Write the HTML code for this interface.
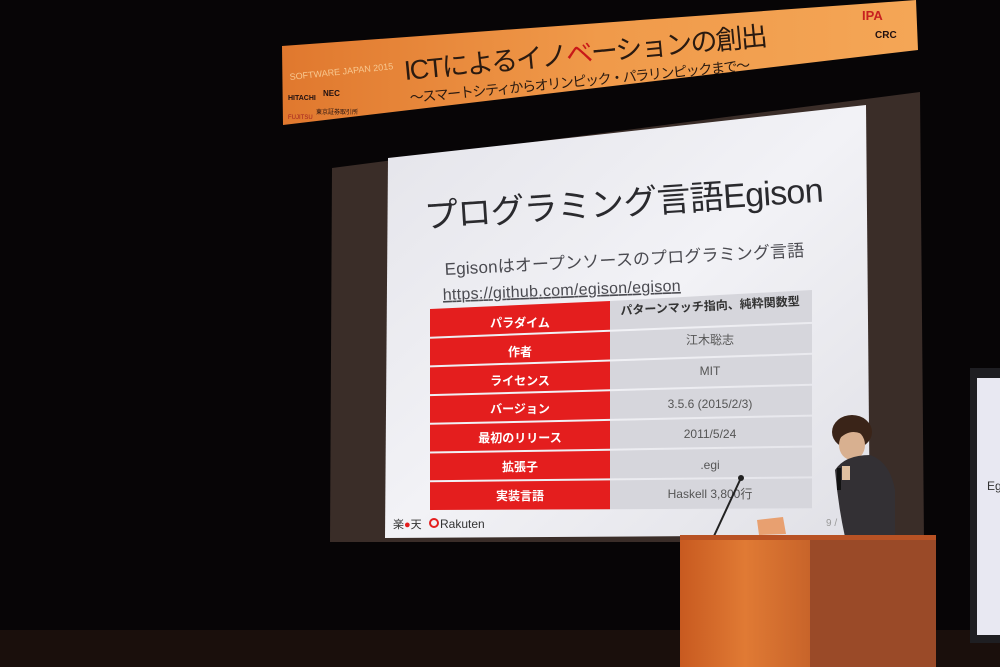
<!DOCTYPE html>
<html><head><meta charset="utf-8"><style>
html,body{margin:0;padding:0;background:#060405;}
svg{display:block}
text{font-family:"Liberation Sans","Noto Sans CJK JP",sans-serif;}
</style></head><body>
<svg width="1000" height="667" viewBox="0 0 1000 667" xmlns="http://www.w3.org/2000/svg">
<defs>
<linearGradient id="ban" x1="0" y1="0" x2="1" y2="0">
<stop offset="0" stop-color="#e0782e"/><stop offset="0.5" stop-color="#f09a4a"/><stop offset="1" stop-color="#f4a656"/>
</linearGradient>
<linearGradient id="slide" x1="0" y1="0" x2="1" y2="1">
<stop offset="0" stop-color="#e4e4ea"/><stop offset="0.5" stop-color="#f2f2f6"/><stop offset="1" stop-color="#e0e0e6"/>
</linearGradient>
<linearGradient id="pod" x1="0" y1="0" x2="1" y2="0">
<stop offset="0" stop-color="#c85a20"/><stop offset="0.5" stop-color="#e07a34"/><stop offset="1" stop-color="#c8642a"/>
</linearGradient>
</defs>
<rect width="1000" height="667" fill="#070506"/>
<rect x="0" y="630" width="1000" height="37" fill="#1a0f0c"/>
<polygon points="332,168 920,92 924,542 330,542" fill="#3a2d28"/>
<polygon points="388,158 866,105 870,535 385,538" fill="url(#slide)"/>
<!-- banner -->
<polygon points="282,46 916,0 918,50 283,125" fill="url(#ban)"/>
<text x="290" y="80" font-size="9" fill="#f8c890" transform="rotate(-6 290 80)">SOFTWARE JAPAN 2015</text>
<text x="288" y="100" font-size="7" font-weight="bold" fill="#201010">HITACHI</text>
<text x="323" y="96" font-size="8" font-weight="bold" fill="#201010">NEC</text>
<text x="288" y="119" font-size="6" fill="#a02020">FUJITSU</text>
<text x="316" y="114" font-size="6" fill="#201010">東京証券取引所</text>
<g transform="rotate(-5.5 405 80)">
<text x="405" y="80" font-size="27" fill="#2a1a10" textLength="365">ICTによるイノ<tspan fill="#c81818">ベ</tspan>ーションの創出</text>
<text x="408" y="103" font-size="14" fill="#2a1a10" textLength="342">〜スマートシティからオリンピック・パラリンピックまで〜</text>
</g>
<text x="862" y="20" font-size="13" font-weight="bold" fill="#c82020">IPA</text>
<text x="875" y="38" font-size="10" font-weight="bold" fill="#201010">CRC</text>
<!-- slide text -->
<g transform="rotate(-3.8 425 228)">
<text x="425" y="228" font-size="34" fill="#2a2a2e" textLength="400">プログラミング言語Egison</text>
</g>
<g transform="rotate(-3 445 275)">
<text x="445" y="275" font-size="17" fill="#4a4a50" textLength="360">Egisonはオープンソースのプログラミング言語</text>
</g>
<g transform="rotate(-2.2 443 300)">
<text x="443" y="300" font-size="16" fill="#4a4a50" text-decoration="underline" textLength="238">https://github.com/egison/egison</text>
</g>
<g fill="#e41e1e">
<polygon points="430,309 610,301 610,329.7 430,336.7"/>
<polygon points="430,338.7 610,331.7 610,359.5 430,365.4"/>
<polygon points="430,367.4 610,361.5 610,389.2 430,394.1"/>
<polygon points="430,396.1 610,391.2 610,418.9 430,422.8"/>
<polygon points="430,424.8 610,420.9 610,448.7 430,451.5"/>
<polygon points="430,453.5 610,450.7 610,478.4 430,480.2"/>
<polygon points="430,482.2 610,480.4 610,509.2 430,510"/>
</g>
<g fill="#d6d6dc">
<polygon points="610,301 812,290 812,321.9 610,329.7"/>
<polygon points="610,331.7 812,323.9 812,352.8 610,359.5"/>
<polygon points="610,361.5 812,354.8 812,383.7 610,389.2"/>
<polygon points="610,391.2 812,385.7 812,414.6 610,418.9"/>
<polygon points="610,420.9 812,416.6 812,445.5 610,448.7"/>
<polygon points="610,450.7 812,447.5 812,476.4 610,478.4"/>
<polygon points="610,480.4 812,478.4 812,508.3 610,509.2"/>
</g>
<g font-size="12" font-weight="bold" fill="#fff" text-anchor="middle">
<text x="520" y="327">パラダイム</text>
<text x="520" y="356">作者</text>
<text x="520" y="385">ライセンス</text>
<text x="520" y="413">バージョン</text>
<text x="520" y="442">最初のリリース</text>
<text x="520" y="471">拡張子</text>
<text x="520" y="500">実装言語</text>
</g>
<g font-size="12" fill="#555" text-anchor="middle">
<text x="710" y="310" font-weight="bold" fill="#333" transform="rotate(-3 710 305)">パターンマッチ指向、純粋関数型</text>
<text x="710" y="344">江木聡志</text>
<text x="710" y="375">MIT</text>
<text x="710" y="408">3.5.6 (2015/2/3)</text>
<text x="710" y="438">2011/5/24</text>
<text x="710" y="469">.egi</text>
<text x="710" y="498">Haskell 3,800行</text>
</g>
<text x="393" y="528" font-size="11" fill="#333">楽<tspan fill="#e41e1e">●</tspan>天</text>
<circle cx="434" cy="523" r="4" fill="none" stroke="#e41e1e" stroke-width="2"/>
<text x="440" y="528" font-size="12" fill="#333">Rakuten</text>
<text x="826" y="526" font-size="10" fill="#999">9 /</text>
<line x1="714" y1="536" x2="740" y2="480" stroke="#222" stroke-width="2"/>
<circle cx="741" cy="478" r="3" fill="#222"/>
<polygon points="757,520 783,517 786,534 759,535" fill="#e8a070"/>
<!-- person -->
<ellipse cx="852" cy="432" rx="20" ry="17" fill="#3a2418"/>
<ellipse cx="852" cy="445" rx="13" ry="15" fill="#d8b090"/>
<path d="M838 420 Q852 410 870 424 L868 438 Q852 425 838 440 Z" fill="#3a2418"/>
<path d="M835 470 Q845 455 870 455 Q890 462 895 490 L895 537 L845 537 Q838 505 835 470 Z" fill="#333034"/>
<rect x="842" y="466" width="8" height="14" fill="#e0c0a0"/>
<rect x="837" y="468" width="4" height="22" fill="#111"/>
<!-- podium -->
<rect x="680" y="535" width="256" height="8" fill="#b85224"/>
<rect x="680" y="540" width="130" height="127" fill="url(#pod)"/>
<rect x="810" y="540" width="126" height="127" fill="#9a4a28"/>
<rect x="970" y="368" width="30" height="275" fill="#1e1e22"/>
<rect x="977" y="378" width="23" height="257" fill="#e8e8f2"/>
<text x="987" y="490" font-size="12" fill="#333">Eg</text>
</svg>
</body></html>
